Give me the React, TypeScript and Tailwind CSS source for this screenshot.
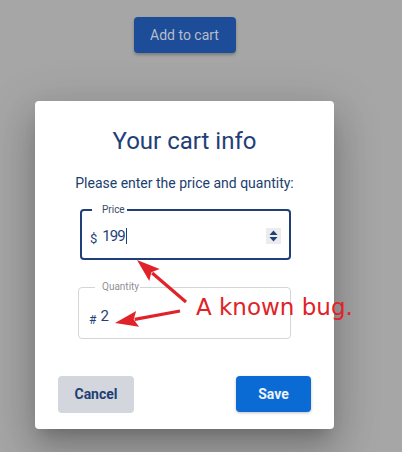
import React from "react";

const roboto = { fontFamily: "Roboto, 'Noto Sans', sans-serif" };

type Pt = [number, number];

// red annotation arrow: line from tail plus a filled triangular head at the tip
const Arrow = ({ tail, tip, head = 23, half = 8 }: { tail: Pt; tip: Pt; head?: number; half?: number }) => {
  const dx = tip[0] - tail[0];
  const dy = tip[1] - tail[1];
  const len = Math.hypot(dx, dy);
  const ux = dx / len;
  const uy = dy / len;
  const bx = tip[0] - ux * head;
  const by = tip[1] - uy * head;
  const nx = -uy;
  const ny = ux;
  const pts = [
    `${tip[0]},${tip[1]}`,
    `${bx + nx * half},${by + ny * half}`,
    `${bx + ux * 4},${by + uy * 4}`,
    `${bx - nx * half},${by - ny * half}`,
  ].join(" ");
  return (
    <g>
      <line x1={tail[0]} y1={tail[1]} x2={bx + ux * 3} y2={by + uy * 3} stroke="#e02328" strokeWidth="3.2" />
      <polygon points={pts} fill="#e02328" />
    </g>
  );
};

const Spinner = () => (
  <span className="flex h-[16px] w-[15px] items-center justify-center bg-[#ececee]">
    <svg width="9" height="12" viewBox="0 0 9 12">
      <path d="M4.5 0.5 L8.5 5 L0.5 5 Z" fill="#1f3f78" />
      <path d="M0.5 7 L8.5 7 L4.5 11.5 Z" fill="#1f3f78" />
    </svg>
  </span>
);

export default function App() {
  return (
    <div
      className="relative flex h-[452px] w-[402px] flex-col items-center overflow-hidden bg-[#a6a6a6] pr-[33px]"
      style={roboto}
    >
      {/* dimmed trigger button behind the overlay */}
      <button className="mt-[17px] h-[36px] w-[102px] rounded-[4px] bg-[#1d4c98] text-[14px] text-[#b8bdc9] shadow-[0_2px_3px_rgba(0,0,0,0.25)]">
        Add to cart
      </button>

      {/* dialog */}
      <div className="mt-[48px] flex w-[299px] flex-col rounded-[4px] bg-white pb-[16px] pt-[26px] shadow-[0_11px_15px_-7px_rgba(0,0,0,0.2),0_24px_38px_3px_rgba(0,0,0,0.14),0_9px_46px_8px_rgba(0,0,0,0.12)]">
        <h2 className="text-center text-[24px] leading-[28px] text-[#1f4077]">Your cart info</h2>
        <p className="mt-[18px] text-center text-[14px] leading-[20px] text-[#213e6e]">
          Please enter the price and quantity:
        </p>

        {/* price, focused */}
        <fieldset className="ml-[45px] mt-[11px] w-[211px] rounded-[4px] border-2 border-[#1e3f7a] pb-[13px] pl-[8px] pr-[8px] pt-[11px]">
          <legend className="ml-[2px] pl-[10px] pr-[2px] text-[10px] leading-[12px] text-[#3b4a68]">Price</legend>
          <div className="flex items-end">
            <span className="text-[13px] leading-[12px] text-[#1f3f78]">$</span>
            <span className="ml-[5px] text-[15px] leading-[18px] tracking-[-1px] text-[#1f3f78]">199</span>
            <span className="mb-[1px] ml-[1px] h-[16px] w-px bg-[#1f3f78]" />
            <span className="ml-auto self-center">
              <Spinner />
            </span>
          </div>
        </fieldset>

        {/* quantity */}
        <fieldset className="ml-[43px] mt-[21px] w-[213px] rounded-[4px] border border-[#d3d5dc] pb-[13px] pl-[10px] pr-[10px] pt-[14px]">
          <legend className="ml-[6px] pl-[7px] pr-[1px] text-[10px] leading-[12px] text-[#8f9196]">Quantity</legend>
          <div className="flex items-end">
            <span className="text-[12px] leading-[10px] text-[#1f3f78]">#</span>
            <span className="ml-[4px] text-[15px] leading-[18px] text-[#1f3f78]">2</span>
          </div>
        </fieldset>

        <div className="mt-[37px] flex items-start justify-between px-[23px]">
          <button className="h-[37px] w-[76px] rounded-[4px] bg-[#d3d6dd] text-[14px] font-bold text-[#1f3f74]">
            Cancel
          </button>
          <button className="h-[36px] w-[75px] rounded-[4px] bg-[#0b6bd4] text-[14px] font-bold text-[#eef3fa] shadow-[0_1px_3px_rgba(0,0,0,0.25)]">
            Save
          </button>
        </div>
      </div>

      {/* annotation overlay */}
      <svg className="pointer-events-none absolute left-0 top-0" width="402" height="452">
        <Arrow tail={[186, 302]} tip={[137, 260]} />
        <Arrow tail={[180, 311]} tip={[115, 323]} />
      </svg>
      <span
        className="absolute left-[196px] top-[296px] text-[23px] leading-[23px] text-[#e02328]"
        style={{ fontFamily: "'DejaVu Sans', sans-serif" }}
      >
        A known bug.
      </span>
    </div>
  );
}
